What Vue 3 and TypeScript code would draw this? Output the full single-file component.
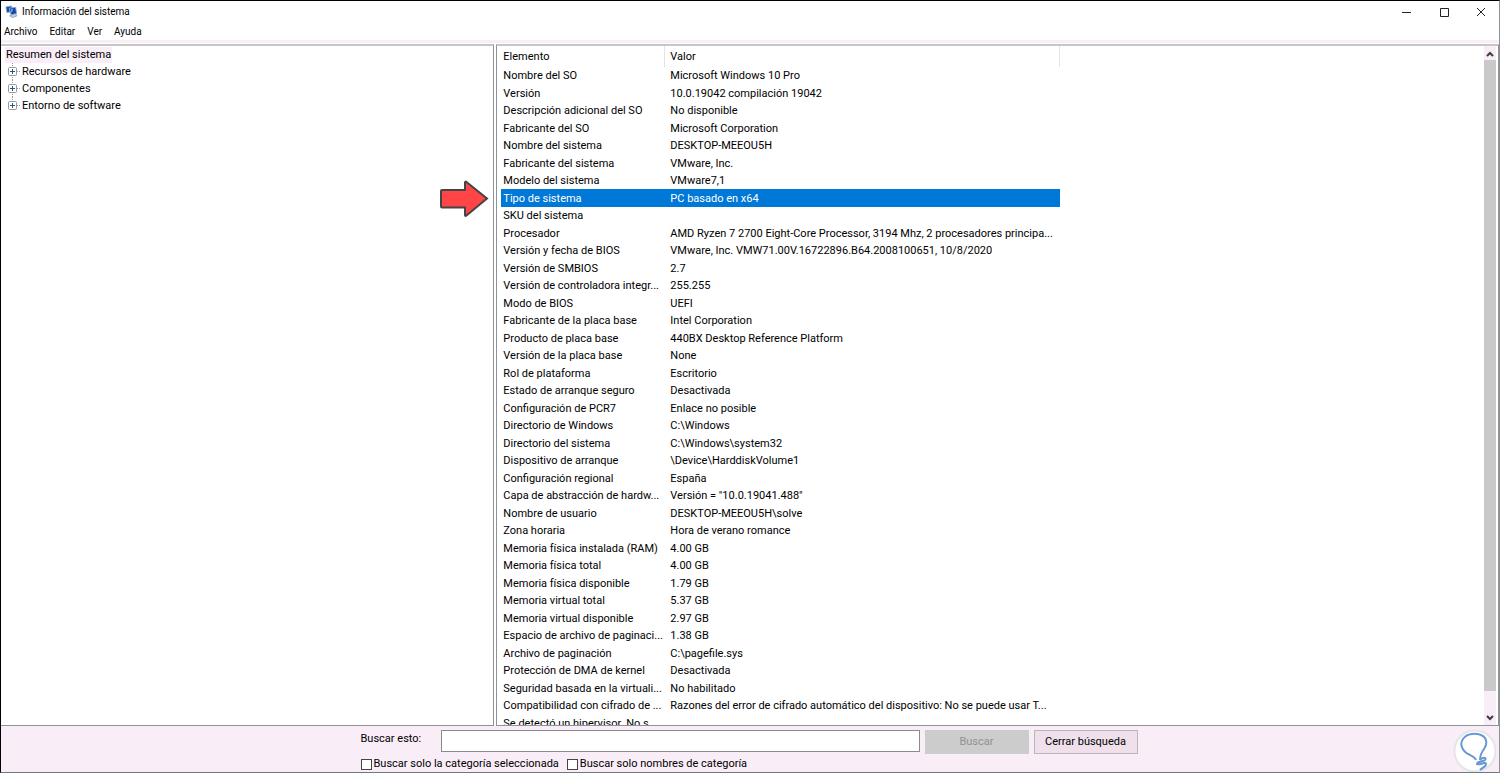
<script setup lang="ts">
import { ref } from 'vue'

interface InfoRow {
  name: string
  value: string
}

const menus: string[] = ['Archivo', 'Editar', 'Ver', 'Ayuda']
const branches: string[] = ['Recursos de hardware', 'Componentes', 'Entorno de software']

const rows: InfoRow[] = [
  { name: 'Nombre del SO', value: 'Microsoft Windows 10 Pro' },
  { name: 'Versión', value: '10.0.19042 compilación 19042' },
  { name: 'Descripción adicional del SO', value: 'No disponible' },
  { name: 'Fabricante del SO', value: 'Microsoft Corporation' },
  { name: 'Nombre del sistema', value: 'DESKTOP-MEEOU5H' },
  { name: 'Fabricante del sistema', value: 'VMware, Inc.' },
  { name: 'Modelo del sistema', value: 'VMware7,1' },
  { name: 'Tipo de sistema', value: 'PC basado en x64' },
  { name: 'SKU del sistema', value: '' },
  { name: 'Procesador', value: 'AMD Ryzen 7 2700 Eight-Core Processor, 3194 Mhz, 2 procesadores principa...' },
  { name: 'Versión y fecha de BIOS', value: 'VMware, Inc. VMW71.00V.16722896.B64.2008100651, 10/8/2020' },
  { name: 'Versión de SMBIOS', value: '2.7' },
  { name: 'Versión de controladora integr...', value: '255.255' },
  { name: 'Modo de BIOS', value: 'UEFI' },
  { name: 'Fabricante de la placa base', value: 'Intel Corporation' },
  { name: 'Producto de placa base', value: '440BX Desktop Reference Platform' },
  { name: 'Versión de la placa base', value: 'None' },
  { name: 'Rol de plataforma', value: 'Escritorio' },
  { name: 'Estado de arranque seguro', value: 'Desactivada' },
  { name: 'Configuración de PCR7', value: 'Enlace no posible' },
  { name: 'Directorio de Windows', value: 'C:\\Windows' },
  { name: 'Directorio del sistema', value: 'C:\\Windows\\system32' },
  { name: 'Dispositivo de arranque', value: '\\Device\\HarddiskVolume1' },
  { name: 'Configuración regional', value: 'España' },
  { name: 'Capa de abstracción de hardw...', value: 'Versión = "10.0.19041.488"' },
  { name: 'Nombre de usuario', value: 'DESKTOP-MEEOU5H\\solve' },
  { name: 'Zona horaria', value: 'Hora de verano romance' },
  { name: 'Memoria física instalada (RAM)', value: '4.00 GB' },
  { name: 'Memoria física total', value: '4.00 GB' },
  { name: 'Memoria física disponible', value: '1.79 GB' },
  { name: 'Memoria virtual total', value: '5.37 GB' },
  { name: 'Memoria virtual disponible', value: '2.97 GB' },
  { name: 'Espacio de archivo de paginaci...', value: '1.38 GB' },
  { name: 'Archivo de paginación', value: 'C:\\pagefile.sys' },
  { name: 'Protección de DMA de kernel', value: 'Desactivada' },
  { name: 'Seguridad basada en la virtuali...', value: 'No habilitado' },
  { name: 'Compatibilidad con cifrado de ...', value: 'Razones del error de cifrado automático del dispositivo: No se puede usar T...' },
  { name: 'Se detectó un hipervisor. No s...', value: '' },
]

const selected = ref('Tipo de sistema')
const query = ref('')
const onlyCategory = ref(false)
const onlyNames = ref(false)
</script>

<template>
  <div class="window">
    <header class="titlebar">
      <svg class="app-icon" viewBox="0 0 14 14" aria-hidden="true">
        <path d="M1 1.500l6-1 1 6-6 1z" fill="#1846b8" stroke="#8fa5c4" />
        <path d="M4.500 3l7-1 1 7-6 1z" fill="#173fae" stroke="#93a9c7" />
        <path d="M6 4l3 0-2 4z" fill="#55b6f2" />
        <path d="M5 11l6-2 2 2-5 2z" fill="#c9d3df" stroke="#91a0b4" />
      </svg>
      <h1>Información del sistema</h1>
      <div class="caption-buttons">
        <button type="button" aria-label="Minimizar">
          <svg viewBox="0 0 10 10"><path d="M1 5.5h9" /></svg>
        </button>
        <button type="button" aria-label="Maximizar">
          <svg viewBox="0 0 10 10"><path d="M1.5 1.5h8v8h-8z" /></svg>
        </button>
        <button type="button" aria-label="Cerrar">
          <svg viewBox="0 0 10 10"><path d="M1 1l8 8M9 1l-8 8" /></svg>
        </button>
      </div>
    </header>

    <nav class="menubar">
      <button v-for="menu in menus" :key="menu" type="button">{{ menu }}</button>
    </nav>

    <main class="panes">
      <section class="tree">
        <button type="button" class="root">Resumen del sistema</button>
        <ul>
          <li v-for="branch in branches" :key="branch">
            <button type="button">
              <svg viewBox="0 0 16 17" aria-hidden="true">
                <path class="dots" d="M7.5 0v17M12 8.5h4" />
                <rect x="3.500" y="4.500" width="8" height="8" rx="1" />
                <path class="plus" d="M5 8.5h5M7.5 6v5" />
              </svg>
              {{ branch }}
            </button>
          </li>
        </ul>
      </section>

      <section class="details">
        <div class="viewport">
          <table>
            <colgroup>
              <col class="name-col" />
              <col />
            </colgroup>
            <thead>
              <tr>
                <th scope="col">Elemento</th>
                <th scope="col">Valor</th>
              </tr>
            </thead>
            <tbody>
              <tr
                v-for="row in rows"
                :key="row.name"
                :class="{ selected: row.name === selected }"
                @click="selected = row.name"
              >
                <td>{{ row.name }}</td>
                <td>{{ row.value }}</td>
              </tr>
            </tbody>
          </table>
        </div>
        <div class="scrollbar">
          <button type="button" aria-label="Subir">
            <svg viewBox="0 0 12 14"><path d="M3 10l3-3 3 3" /></svg>
          </button>
          <div class="track"><div class="thumb"></div></div>
          <button type="button" aria-label="Bajar">
            <svg viewBox="0 0 12 14"><path d="M3 5l3 3 3-3" /></svg>
          </button>
        </div>
        <svg class="pointer" viewBox="0 0 50 38" aria-hidden="true">
          <path d="M3 10h23V2.500Q26 1 27.500 2L48 18.500 27.500 35.500Q26 36.500 26 35V27.500H3Q2 27.500 2 26.500V11Q2 10 3 10z" />
        </svg>
      </section>
    </main>

    <form class="search" @submit.prevent>
      <label class="search-label" for="query">Buscar esto:</label>
      <input id="query" v-model="query" class="query" type="text" />
      <button type="submit" class="find" disabled>Buscar</button>
      <button type="button" class="close">Cerrar búsqueda</button>
      <div class="options">
        <label><input v-model="onlyCategory" type="checkbox" />Buscar solo la categoría seleccionada</label>
        <label><input v-model="onlyNames" type="checkbox" />Buscar solo nombres de categoría</label>
      </div>
    </form>

    <svg class="badge" viewBox="0 0 44 44" aria-hidden="true">
      <circle cx="22" cy="22" r="20.500" />
      <path d="M23 31C22 28 19 27 15 25C8 21 7 14 10 10C14 4 23 4 28 6C35 9 34 16 31 20C28 24 27 26 27 31M27 31C29 28 34 28 32 31C30 33 24 32 24 35C25 37 33 32 33 35C33 38 29 39 27 41" />
    </svg>
  </div>
</template>

<style>
body {
  margin: 0;
}
</style>

<style scoped>
.window {
  position: relative;
  display: flex;
  flex-direction: column;
  box-sizing: border-box;
  height: 100vh;
  overflow: hidden;
  border: 1px solid #000;
  border-right-color: #8b9492;
  border-bottom-color: #687d75;
  background: #fff;
  color: #000;
  font: 11px/16px Roboto, "Open Sans", sans-serif;
}

button {
  margin: 0;
  padding: 0;
  border: 0;
  background: none;
  color: inherit;
  font: inherit;
}

.titlebar {
  display: flex;
  flex: none;
  align-items: center;
  height: 22px;
  padding-left: 4px;
}

.app-icon {
  width: 13px;
  height: 14px;
  margin-right: 4px;
}

h1 {
  flex: 1;
  margin: 0;
  font-size: 10px;
  font-weight: 400;
}

.caption-buttons {
  display: flex;
}

.caption-buttons button {
  display: flex;
  align-items: center;
  justify-content: center;
  width: 38px;
  height: 21px;
}

.caption-buttons button:last-child {
  width: 36px;
}

.caption-buttons svg {
  width: 10px;
  height: 10px;
  fill: none;
  stroke: #222;
}

.menubar {
  display: flex;
  flex: none;
  gap: 12px;
  height: 17px;
  padding-left: 3px;
  border-bottom: 3px solid #f9edf7;
  font-size: 10px;
}

.panes {
  display: grid;
  flex: 1;
  grid-template-columns: 493fr 1002fr;
  gap: 2px;
  min-height: 0;
  padding-top: 1px;
}

.tree,
.details {
  min-width: 0;
  min-height: 0;
  border: 1px solid #8e9299;
  border-top: 2px solid #c6c6c6;
  border-left: 0;
}

.tree {
  padding: 1px 4px;
}

.root {
  display: block;
  height: 16px;
  padding: 0 1px;
  background: #f9edf7;
}

ul {
  margin: 0;
  padding: 0;
  list-style: none;
}

li button {
  display: flex;
  align-items: center;
  height: 17px;
}

li svg {
  width: 16px;
  height: 17px;
  margin-right: 1px;
  fill: #fff;
  stroke: #98999c;
}

li:last-child .dots {
  d: path("M7.5 0v9M12 8.5h4");
}

.dots {
  stroke-dasharray: 1 1;
}

.plus {
  stroke: #35518e;
}

.details {
  position: relative;
  display: flex;
  border-left: 1px solid #8e9299;
}

.viewport {
  flex: 1;
  overflow: hidden;
}

table {
  width: 563px;
  border-collapse: separate;
  border-spacing: 0;
  table-layout: fixed;
}

.name-col {
  width: 168px;
}

th,
td {
  padding: 0 0 0 5px;
  font-weight: 400;
  line-height: 17px;
  text-align: left;
  white-space: nowrap;
}

td:first-child,
th:first-child {
  padding-left: 6px;
}

th {
  height: 21px;
  border-right: 1px solid #e3e3e3;
}

td {
  height: 17px;
}

tr:nth-child(even) td {
  height: 18px;
}

.selected {
  color: #fff;
}

.selected td {
  background: #0078d7;
}

.selected td:first-child {
  background: linear-gradient(to right, #fff 4px, #0078d7 4px);
}

.scrollbar {
  display: flex;
  flex: none;
  flex-direction: column;
  width: 12px;
  margin-right: 2px;
  background: #f9edf7;
}

.scrollbar button {
  height: 14px;
}

.scrollbar svg {
  display: block;
  width: 12px;
  height: 14px;
  fill: none;
  stroke: #3d3d3d;
  stroke-width: 2;
}

.track {
  flex: 1;
}

.thumb {
  height: 97%;
  background: #c9c9c9;
}

.pointer {
  position: absolute;
  top: 134px;
  left: -58px;
  width: 50px;
  height: 38px;
  fill: #ff4545;
  stroke: #444;
  stroke-width: 2;
}

.search {
  display: grid;
  flex: none;
  grid-template-columns: 75px 479px 104px 104px;
  grid-template-rows: 24px 16px;
  column-gap: 5px;
  row-gap: 2px;
  justify-content: center;
  padding: 4px 2px 0 0;
  background: #f9edf7;
}

.search-label {
  padding-top: 1px;
}

.query {
  box-sizing: border-box;
  width: 100%;
  height: 22px;
  padding: 0 4px;
  border: 1px solid #8b8b8b;
  background: #fff;
  font: inherit;
}

.find,
.close {
  height: 24px;
}

.find {
  background: #ccc;
  color: #929292;
}

.close {
  border: 1px solid #b8b8b8;
  background: #efe0eb;
}

.options {
  display: flex;
  grid-column: 1 / -1;
  gap: 8px;
}

.options label {
  display: flex;
  align-items: center;
  gap: 2px;
}

.options input {
  appearance: none;
  box-sizing: border-box;
  width: 11px;
  height: 11px;
  margin: 0;
  border: 1px solid #444;
  background: #fff;
}

.options input:checked {
  background: #444;
}

.badge {
  position: absolute;
  right: 2px;
  bottom: -1px;
  width: 44px;
  height: 44px;
  fill: none;
  stroke: #6698d5;
  stroke-width: 2;
}

.badge circle {
  fill: #fff;
  stroke: #e4e6e8;
}
</style>
